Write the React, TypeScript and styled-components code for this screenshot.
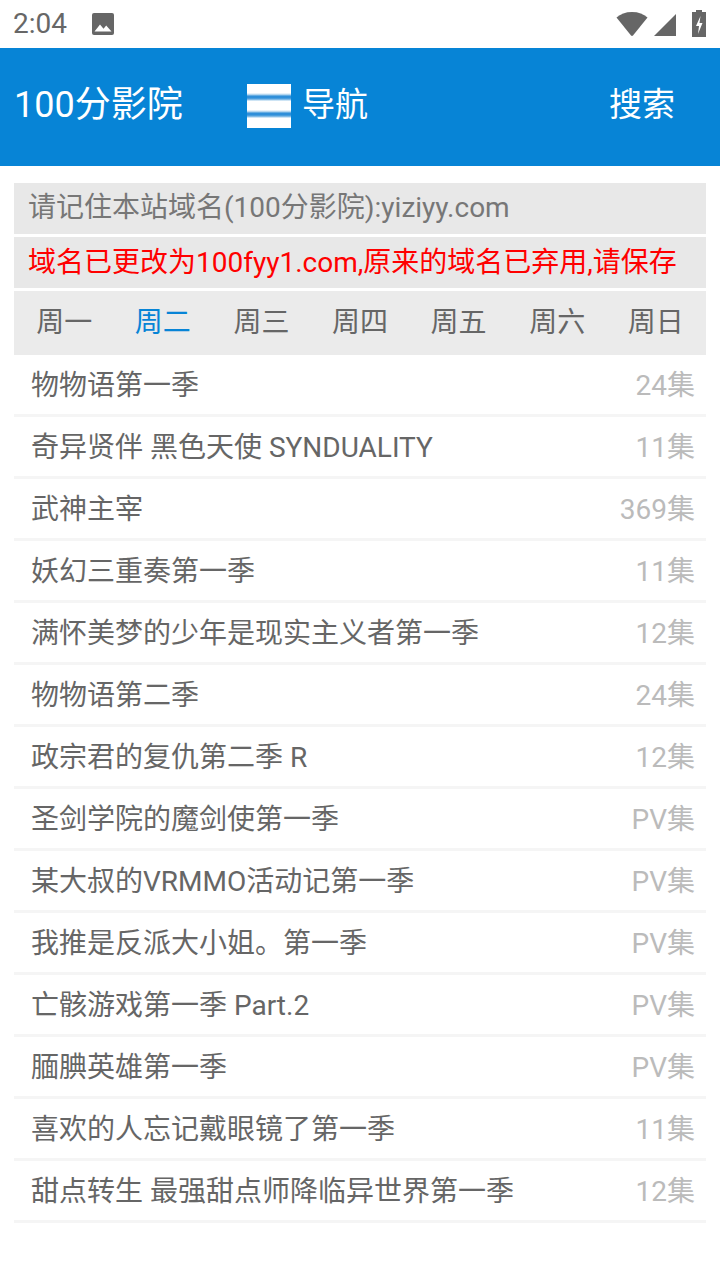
import React from "react";
import styled, { createGlobalStyle } from "styled-components";

const Global = createGlobalStyle`
  html, body { margin: 0; padding: 0; background: #fff; }
  body { font-family: Roboto, "Noto Sans CJK SC", sans-serif; }
  * { box-sizing: border-box; }
`;
const Page = styled.div`width: 720px; height: 1280px; overflow: hidden; background: #fff;`;
const StatusBar = styled.div`
  height: 48px; display: flex; align-items: center; padding: 0 14px 0 13px; color: #666;
`;
const Time = styled.span`font-size: 28px; line-height: 48px; width: 78px; color: #676767;`;
const StatusRight = styled.div`margin-left: auto; display: flex; align-items: center;`;
const Wifi = styled.svg`margin-right: 6px;`;
const Signal = styled.svg`margin-right: 16px; margin-top: 2px;`;
const Header = styled.header`
  height: 118px; background: #0784d6; color: #fff; display: flex; align-items: center; padding: 0 0 4px 14px;
`;
const Title = styled.div`font-size: 36px; line-height: 48px; width: 233px; white-space: nowrap;`;
const NavGroup = styled.div`display: flex; align-items: center; gap: 11px; width: 362px;`;
const NavLabel = styled.span`font-size: 33px; line-height: 48px; white-space: nowrap;`;
const MenuIcon = styled.div`
  width: 44px; height: 44px; margin-top: 2px;
  background: linear-gradient(180deg, #fff 0, #fff 9px, #9cc9ea 11px, #2f8fd9 12px, #2f8fd9 14px, #9cc9ea 16px, #fff 17px, #fff 26px, #9cc9ea 28px, #2f8fd9 29px, #2f8fd9 31px, #9cc9ea 33px, #fff 34px, #fff 44px);
`;
const Main = styled.main`padding: 17px 14px 0; display: flex; flex-direction: column; gap: 3px;`;
const Notice = styled.div<{ $red?: boolean }>`
  height: 51px; background: #e8e8e8; padding-left: 14px; font-size: 28px; white-space: nowrap;
  line-height: ${(p) => (p.$red ? "51px" : "49px")};
  color: ${(p) => (p.$red ? "#ff0000" : "#777")};
`;
const Tabs = styled.nav`
  height: 64px; background: #ebebeb; display: grid; grid-template-columns: repeat(7, 1fr); margin-bottom: -3px; padding: 0 1px;
`;
const Tab = styled.div<{ $active?: boolean }>`
  font-size: 28px; line-height: 63px; text-align: center; color: ${(p) => (p.$active ? "#0784d6" : "#666")};
`;
const List = styled.ul`list-style: none; margin: 0; padding: 0;`;
const Row = styled.li`
  height: 62px; border-bottom: 3px solid #f5f5f5; display: flex; justify-content: space-between; padding: 0 11px 0 17px;
  font-size: 28px; line-height: 62px; white-space: nowrap;
`;
const Name = styled.span`color: #666;`;
const Count = styled.span`color: #bbb;`;

const days = ["周一", "周二", "周三", "周四", "周五", "周六", "周日"];
const rows = [
  ["物物语第一季", "24集"],
  ["奇异贤伴 黑色天使 SYNDUALITY", "11集"],
  ["武神主宰", "369集"],
  ["妖幻三重奏第一季", "11集"],
  ["满怀美梦的少年是现实主义者第一季", "12集"],
  ["物物语第二季", "24集"],
  ["政宗君的复仇第二季 R", "12集"],
  ["圣剑学院的魔剑使第一季", "PV集"],
  ["某大叔的VRMMO活动记第一季", "PV集"],
  ["我推是反派大小姐。第一季", "PV集"],
  ["亡骸游戏第一季 Part.2", "PV集"],
  ["腼腆英雄第一季", "PV集"],
  ["喜欢的人忘记戴眼镜了第一季", "11集"],
  ["甜点转生 最强甜点师降临异世界第一季", "12集"],
];

export default function App() {
  return (
    <Page>
      <Global />
      <StatusBar>
        <Time>2:04</Time>
        <svg width="24" height="24" viewBox="0 0 24 24" aria-hidden="true">
          <rect x="1" y="1" width="22" height="22" rx="2" fill="#666" />
          <path d="M3.500 19.500 9 12.500l3.500 4.300 2.700-3.200 5.300 5.900z" fill="#fff" />
        </svg>
        <StatusRight>
          <Wifi width="32" height="26" viewBox="0 0 32 26" aria-hidden="true">
            <path d="M0.500 6.500C4.500 3 9.500 1 16 1s11.500 2 15.500 5.500L17 24.500a1.500 1.500 0 0 1-2 0z" fill="#666" />
          </Wifi>
          <Signal width="22" height="22" viewBox="0 0 22 22" aria-hidden="true">
            <path d="M0 22 22 0v22z" fill="#666" />
          </Signal>
          <svg width="14" height="28" viewBox="0 0 14 28" aria-hidden="true">
            <path d="M4 0h6v2h4v25H0V2h4z" fill="#666" />
            <path d="M8.500 6 4 16h3l-1 8 4.500-11H7.500z" fill="#fff" />
          </svg>
        </StatusRight>
      </StatusBar>
      <Header>
        <Title>100分影院</Title>
        <NavGroup>
          <MenuIcon />
          <NavLabel>导航</NavLabel>
        </NavGroup>
        <NavLabel>搜索</NavLabel>
      </Header>
      <Main>
        <Notice>请记住本站域名(100分影院):yiziyy.com</Notice>
        <Notice $red>域名已更改为100fyy1.com,原来的域名已弃用,请保存</Notice>
        <Tabs>
          {days.map((d, i) => (
            <Tab key={d} $active={i === 1}>{d}</Tab>
          ))}
        </Tabs>
        <List>
          {rows.map(([n, c]) => (
            <Row key={n}>
              <Name>{n}</Name>
              <Count>{c}</Count>
            </Row>
          ))}
        </List>
      </Main>
    </Page>
  );
}
